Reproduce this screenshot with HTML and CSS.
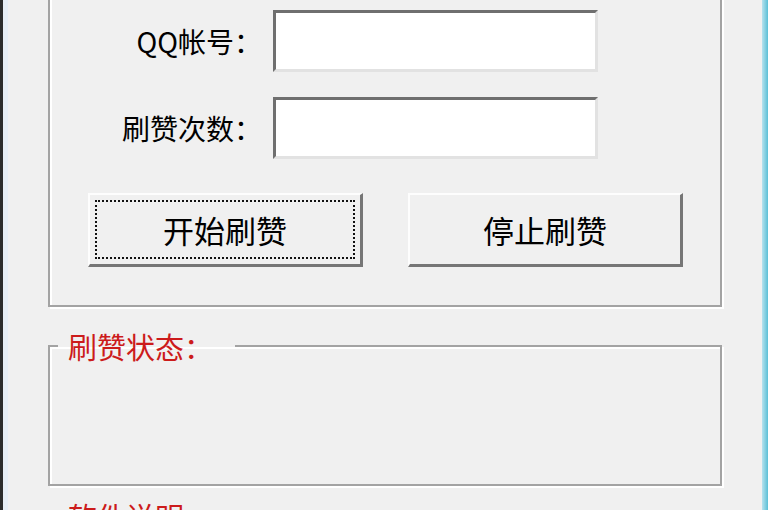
FILE: index.html
```html
<!DOCTYPE html>
<html lang="zh-CN">
<head>
    <meta charset="UTF-8">
    <meta name="viewport" content="width=device-width, initial-scale=1.0">
    <title>QQ刷赞</title>
    <link rel="stylesheet" href="styles.css">
</head>
<body>
    <div class="window">
        <div class="edgeLeft"></div>
        <div class="client">
            <fieldset class="group groupMain">
                <div class="formGrid">
                    <span class="label">QQ帐号：</span>
                    <input type="text" class="field" id="qq">
                    <span class="label">刷赞次数：</span>
                    <input type="text" class="field" id="count">
                </div>
                <div class="buttons">
                    <button type="button" class="btn focused"><span class="focusRing">开始刷赞</span></button>
                    <button type="button" class="btn"><span class="focusRing">停止刷赞</span></button>
                </div>
            </fieldset>

            <fieldset class="group groupStatus">
                <legend class="legend">刷赞状态：</legend>
                <div class="statusBody"></div>
            </fieldset>

            <fieldset class="group groupNext">
                <legend class="legend">软件说明：</legend>
                <div class="statusBody"></div>
            </fieldset>
        </div>
        <div class="edgeRight"></div>
    </div>
</body>
</html>
```

FILE: styles.css
```css
*{
    margin: 0;
    box-sizing: border-box;
}

html, body{
    height: 100%;
    overflow: hidden;
}

body{
    background: #f0f0f0;
    font-family: "Noto Sans CJK SC", "Liberation Sans", sans-serif;
    color: #000;
}

.window{
    display: flex;
    height: 510px;
}

.edgeLeft{
    width: 8px;
    border-left: 3px solid #2b2b2b;
    background: #e6edf4;
}

.edgeRight{
    width: 6px;
    background: linear-gradient(to right, #b8e2ee, #5bbfd6);
}

.client{
    flex: 1;
    padding: 0 40px;
}

/* group boxes */
.group{
    border: 2px solid #a3a3a3;
    box-shadow: inset 2px 2px 0 #fff, 2px 2px 0 #fff;
    padding: 0;
    min-width: 0;
}

.groupMain{
    margin-top: -20px;
    padding: 28px 0 38px 0;
}

.groupStatus{
    margin-top: 23px;
}

.groupNext{
    margin-top: 14px;
}

.legend{
    margin-left: 8px;
    padding: 0 22px 0 10px;
    color: #cc1b1b;
    font-size: 29px;
    line-height: 32px;
}

.statusBody{
    height: 122px;
}

/* form */
.formGrid{
    display: grid;
    grid-template-columns: 212px 325px;
    column-gap: 11px;
    row-gap: 25px;
    align-items: center;
}

.label{
    text-align: right;
    font-size: 28px;
    line-height: 32px;
}

.field{
    height: 62px;
    background: #fff;
    border-style: solid;
    border-width: 3px 3px 3px 3px;
    border-color: #6f6f6f #e2e2e2 #e2e2e2 #6f6f6f;
    outline: none;
    font-size: 26px;
}

/* Button */
.buttons{
    display: flex;
    gap: 45px;
    margin: 34px 0 0 38px;
}

.btn{
    width: 275px;
    height: 74px;
    padding: 5px;
    background: #f0f0f0;
    border-style: solid;
    border-width: 2px 3px 3px 2px;
    border-color: #fdfdfd #767676 #767676 #fdfdfd;
    font-family: inherit;
    font-size: 31px;
    color: #000;
}

.focusRing{
    display: flex;
    align-items: center;
    justify-content: center;
    height: 100%;
    border: 2px dotted transparent;
}

.focused .focusRing{
    border-color: #111;
}
```
